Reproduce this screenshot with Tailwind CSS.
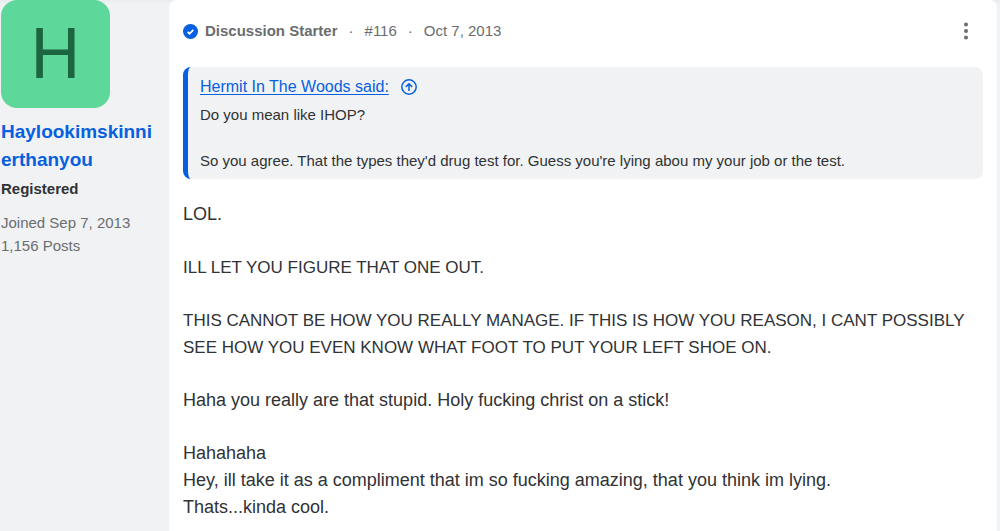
<!DOCTYPE html>
<html lang="en">
<head>
    <meta charset="UTF-8">
    <meta name="viewport" content="width=device-width, initial-scale=1.0">
    <title>Discussion post #116</title>
    <script src="https://cdn.jsdelivr.net/npm/@tailwindcss/browser@4"></script>
</head>
<body class="bg-[#f1f2f4] font-['Liberation_Sans',Arial,sans-serif] text-[#303235]">

    <article class="flex min-h-screen bg-linear-to-b from-[#ebecee] to-[#f1f2f4] to-[4px] pr-[3px]">

        <!-- Author -->
        <aside class="w-[169px] shrink-0 pl-px">
            <div class="flex h-[108px] w-[109px] items-center justify-center rounded-2xl bg-[#5dd89a] font-['Roboto',sans-serif] text-[70px] text-[#1c663f]">H</div>
            <a href="#" class="mt-[10px] block w-[156px] text-[19px] leading-7 font-bold break-all text-[#0660e0]">Haylookimskinnierthanyou</a>
            <div class="mt-[3px] text-[15px] leading-[23px] font-bold">Registered</div>
            <div class="mt-[11px] text-[15px] leading-[23px] text-[#6a6d70]">
                <div>Joined Sep 7, 2013</div>
                <div>1,156 Posts</div>
            </div>
        </aside>

        <!-- Post -->
        <main class="min-w-0 flex-1 rounded-t-lg bg-white px-[14px]">
            <header class="flex items-center justify-between py-5 text-[15px] leading-[22px] text-[#6a6d70]">
                <div class="flex items-center">
                    <svg class="mr-[7px] size-[15px]" viewBox="0 0 15 15" fill="none">
                        <circle cx="7.5" cy="7.5" r="7.5" fill="#0660e0"/>
                        <path d="M4.6 7.8 6.6 9.7 10.3 5.9" stroke="#fff" stroke-width="1.7"/>
                    </svg>
                    <span class="font-bold">Discussion Starter</span>
                    <span class="px-[11px]">·</span>
                    <a href="#">#116</a>
                    <span class="px-[11px]">·</span>
                    <time datetime="2013-10-07">Oct 7, 2013</time>
                </div>
                <button type="button" aria-label="More options" class="mr-[15px]">
                    <svg class="h-[18px] w-1" viewBox="0 0 4 18" fill="currentColor">
                        <circle cx="2" cy="2.5" r="2"/>
                        <circle cx="2" cy="9" r="2"/>
                        <circle cx="2" cy="15.5" r="2"/>
                    </svg>
                </button>
            </header>

            <blockquote class="mt-[5px] rounded-lg border-l-[5px] border-[#0660e0] bg-[#f1f2f4] px-3 pt-2 pb-[7px] text-[15px] leading-[23px]">
                <a href="#" class="mb-1 flex items-center gap-3 text-base leading-6 text-[#0660e0]">
                    <span class="underline underline-offset-2">Hermit In The Woods said:</span>
                    <svg class="size-4" viewBox="0 0 16 16" fill="none" stroke="currentColor" stroke-width="1.5">
                        <circle cx="8" cy="8" r="7.2"/>
                        <path d="M8 12V4.8M4.8 7.9 8 4.7l3.2 3.2"/>
                    </svg>
                </a>
                <p>Do you mean like IHOP?</p>
                <p class="mt-[23px]">So you agree. That the types they'd drug test for. Guess you're lying abou my your job or the test.</p>
            </blockquote>

            <div class="mt-[22px] space-y-[26px] text-lg leading-[27px]">
                <p>LOL.</p>
                <p class="text-[17px] leading-[27px]">ILL LET YOU FIGURE THAT ONE OUT.</p>
                <p class="text-[17px] leading-[27px]">THIS CANNOT BE HOW YOU REALLY MANAGE. IF THIS IS HOW YOU REASON, I CANT POSSIBLY SEE HOW YOU EVEN KNOW WHAT FOOT TO PUT YOUR LEFT SHOE ON.</p>
                <p>Haha you really are that stupid. Holy fucking christ on a stick!</p>
                <p>Hahahaha<br>Hey, ill take it as a compliment that im so fucking amazing, that you think im lying.<br>Thats...kinda cool.</p>
            </div>
        </main>
    </article>

</body>
</html>
